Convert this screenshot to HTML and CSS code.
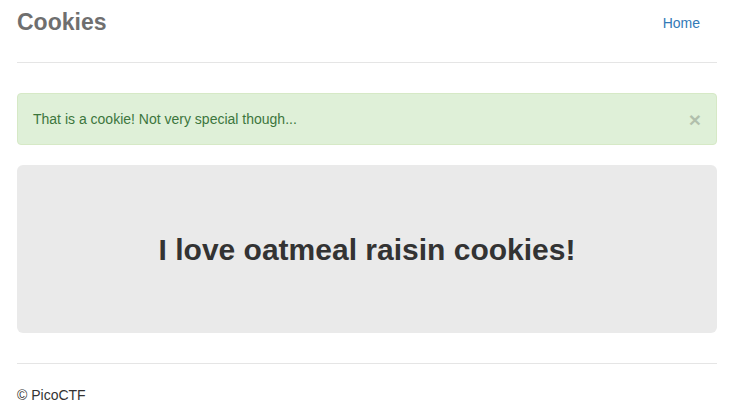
FILE: index.html
```html
<!DOCTYPE html>
<html lang="en">
<head>
<meta charset="utf-8">
<title>Cookies</title>
<link rel="stylesheet" href="styles.css">
</head>
<body>
<div class="container">
  <div class="header">
    <h3 class="brand">Cookies</h3>
    <nav class="nav">
      <a class="nav-link" href="#">Home</a>
    </nav>
  </div>
  <div class="alert">
    <span>That is a cookie! Not very special though...</span>
    <button class="close" type="button">&times;</button>
  </div>
  <div class="jumbotron">
    <h2 class="jumbo-title">I love oatmeal raisin cookies!</h2>
  </div>
  <footer class="footer">
    <p>&copy; PicoCTF</p>
  </footer>
</div>
</body>
</html>
```

FILE: styles.css
```css
* { box-sizing: border-box; }
html, body {
  margin: 0;
  padding: 0;
  background: #fff;
}
body {
  font-family: "Liberation Sans", Arial, Helvetica, sans-serif;
  font-size: 14px;
  line-height: 20px;
  color: #333;
}
.container {
  padding: 2px 18px 0 17px;
}
.header {
  display: flex;
  justify-content: space-between;
  align-items: center;
  padding-bottom: 20px;
  border-bottom: 1px solid #e5e5e5;
}
.brand {
  margin: 0;
  font-size: 23px;
  line-height: 40px;
  font-weight: bold;
  color: #6f6f6f;
}
.nav-link {
  display: block;
  padding: 11px 17px 9px 15px;
  color: #337ab7;
  text-decoration: none;
  font-size: 14px;
  line-height: 20px;
}
.alert {
  margin-top: 30px;
  margin-bottom: 20px;
  padding: 15px;
  height: 52px;
  border: 1px solid #d6e9c6;
  border-radius: 4px;
  background: #dff0d8;
  color: #3c763d;
  display: flex;
  align-items: center;
  justify-content: space-between;
}
.close {
  padding: 0;
  margin: 0;
  border: 0;
  background: transparent;
  font-family: "Liberation Sans", Arial, sans-serif;
  font-size: 21px;
  font-weight: bold;
  line-height: 1;
  color: #000;
  opacity: 0.2;
  cursor: pointer;
}
.jumbotron {
  height: 168px;
  border-radius: 6px;
  background: #eaeaea;
  display: flex;
  align-items: center;
  justify-content: center;
}
.jumbo-title {
  margin: 0;
  font-size: 30px;
  line-height: 33px;
  font-weight: bold;
  color: #333;
}
.footer {
  margin-top: 30px;
  padding-top: 21px;
  border-top: 1px solid #e5e5e5;
}
.footer p {
  margin: 0;
  color: #333;
}
```
